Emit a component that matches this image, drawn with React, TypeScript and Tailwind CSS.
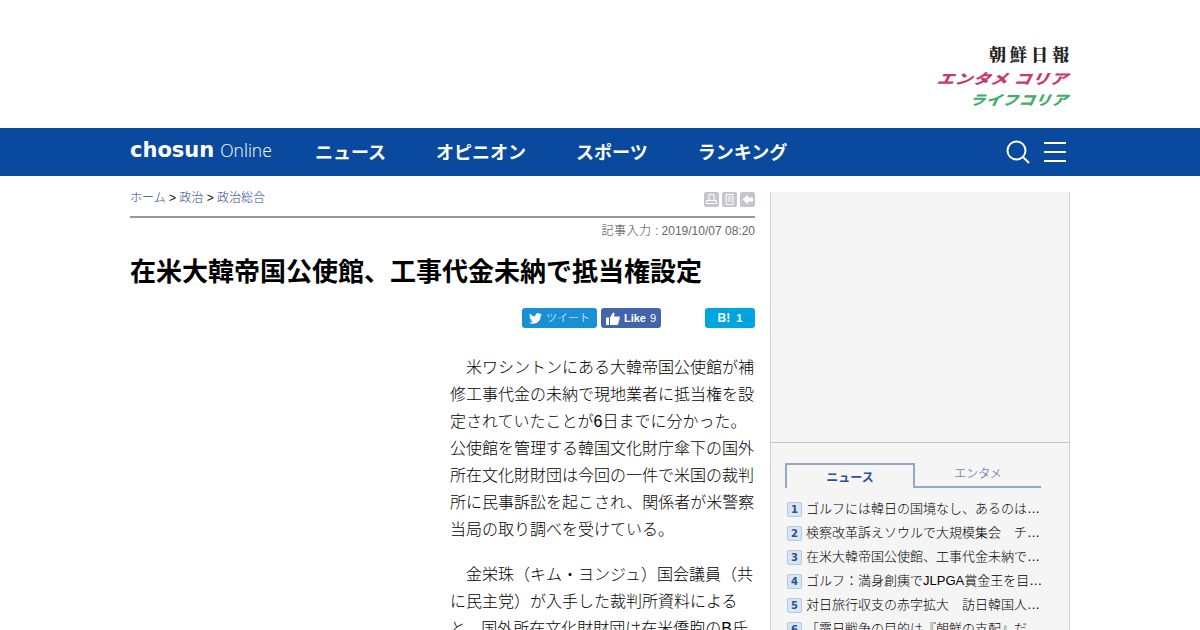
import React from 'react'

const jp = "font-['Liberation_Sans','Noto_Sans_CJK_JP',sans-serif]"

const navItems = ['ニュース', 'オピニオン', 'スポーツ', 'ランキング']

const ranking = [
  'ゴルフには韓日の国境なし、あるのは…',
  '検察改革訴えソウルで大規模集会　チ…',
  '在米大韓帝国公使館、工事代金未納で…',
  'ゴルフ：満身創痍でJLPGA賞金王を目…',
  '対日旅行収支の赤字拡大　訪日韓国人…',
  '「露日戦争の目的は『朝鮮の支配』だ…',
]

const SmallIcon = ({ kind }: { kind: string }) => (
  <span className="flex h-[15px] w-[15px] items-center justify-center rounded-[2px] bg-[#c4c8cc]">
    <svg width="11" height="11" viewBox="0 0 11 11" fill="none" stroke="#fff" strokeWidth="1">
      {kind === 'print' && <path d="M3 .5h5v6H3zM.5 6.5h10v3H.5z" />}
      {kind === 'list' && <path d="M2 .5h7v10H2zM3.5 3h4M3.5 5h4M3.5 7h4" />}
      {kind === 'back' && <path d="M1 5.5L5.5 1.5v2.5h5v3h-5v2.5z" fill="#fff" />}
    </svg>
  </span>
)

const App = () => {
  return (
    <div className={`h-[630px] w-full overflow-hidden bg-white ${jp}`}>
      {/* top logos */}
      <div className="mx-auto flex h-[128px] w-[940px] flex-col items-end pt-[44px]">
        <p className="mr-[-3px] h-[20px] font-['Noto_Serif_CJK_JP','Noto_Sans_CJK_JP',serif] text-[17px] font-black leading-[20px] tracking-[4px] text-[#222]">
          朝鮮日報
        </p>
        <p className="mr-[1px] mt-[8px] h-[14px] origin-right -skew-x-[22deg] scale-x-[1.24] text-[14px] font-black leading-[14px] tracking-[0.5px] text-[#c8396f]">
          エンタメ コリア
        </p>
        <p className="mr-[1px] mt-[8px] h-[14px] origin-right -skew-x-[22deg] scale-x-[1.17] text-[13.5px] font-black leading-[14px] tracking-[0.5px] text-[#3fae6b]">
          ライフコリア
        </p>
      </div>

      {/* nav */}
      <div className="h-[48px] bg-[#0a4a9e]">
        <div className="mx-auto flex h-full w-[940px] items-center">
          <div className="flex w-[185px] items-baseline pb-[4px] text-white">
            <span className="font-['DejaVu_Sans',sans-serif] text-[21px] font-bold leading-none">chosun</span>
            <span className="ml-[6px] font-['Open_Sans',sans-serif] text-[17.5px] font-light leading-none">Online</span>
          </div>
          <nav className="flex gap-[50px] pt-[2px] text-[18px] font-bold text-white">
            {navItems.map((item) => (
              <a key={item}>{item}</a>
            ))}
          </nav>
          <div className="ml-auto mr-[4px] flex items-center gap-[14px]">
            <svg width="24" height="24" viewBox="0 0 24 24" fill="none" stroke="#fff" strokeWidth="2">
              <circle cx="10.5" cy="10.5" r="9" />
              <path d="M17 17l6 6" />
            </svg>
            <div className="flex h-[20px] w-[22px] flex-col justify-between">
              <div className="h-[2px] bg-white" />
              <div className="h-[2px] bg-white" />
              <div className="h-[2px] bg-white" />
            </div>
          </div>
        </div>
      </div>

      {/* content */}
      <div className="mx-auto mt-[16px] flex w-[940px] justify-between">
        <div className="w-[625px]">
          <div className="flex h-[24px] items-start justify-between">
            <p className="text-[12px] font-light leading-[13px] text-[#111]">
              <a className="text-[#1f4490]">ホーム</a> &gt; <a className="text-[#1f4490]">政治</a> &gt;{' '}
              <a className="text-[#1f4490]">政治総合</a>
            </p>
            <div className="flex gap-[3px]">
              <SmallIcon kind="print" />
              <SmallIcon kind="list" />
              <SmallIcon kind="back" />
            </div>
          </div>
          <div className="h-[2px] bg-[#8e9aa6]" />
          <p className="mt-[5px] text-right text-[12px] leading-[16px] text-[#666]">
            <span className="font-light tracking-[0.5px] text-[#444]">記事入力</span> : 2019/10/07 08:20
          </p>
          <h1 className="mt-[15px] text-[26px] font-bold leading-[36px] text-black">在米大韓帝国公使館、工事代金未納で抵当権設定</h1>

          <div className="mt-[18px] flex h-[20px] text-[11px] text-white">
            <div className="ml-[392px] flex w-[75px] items-center justify-center gap-[4px] rounded-[3px] bg-[#1b8fd6]">
              <svg width="13" height="11" viewBox="0 0 24 20" fill="#fff">
                <path d="M24 2.4a9.8 9.8 0 0 1-2.8.8A4.9 4.9 0 0 0 23.3.5a9.8 9.8 0 0 1-3.1 1.2 4.9 4.9 0 0 0-8.4 4.5A14 14 0 0 1 1.7 1a4.9 4.9 0 0 0 1.5 6.6 4.9 4.9 0 0 1-2.2-.6 4.9 4.9 0 0 0 3.9 4.9 4.9 4.9 0 0 1-2.2.1 4.9 4.9 0 0 0 4.6 3.4A9.9 9.9 0 0 1 0 17.4 14 14 0 0 0 21.5 5a10 10 0 0 0 2.5-2.6z" />
              </svg>
              <span className="font-light">ツイート</span>
            </div>
            <div className="ml-[4px] flex w-[60px] items-center justify-center gap-[4px] rounded-[3px] bg-[#4264aa]">
              <svg width="14" height="13" viewBox="0 0 14 13" fill="#fff">
                <path d="M0 5.5h3V13H0zM4 5.5L7 .5c1.3 0 1.8 1 1.5 2L8 4.5h4.8c.8 0 1.2.7 1 1.4l-1.6 6c-.2.7-.6 1.1-1.3 1.1H4z" />
              </svg>
              <span className="font-bold">Like</span>
              <span>9</span>
            </div>
            <div className="ml-[44px] flex w-[50px] items-center justify-center gap-[6px] rounded-[3px] bg-[#00a4de] text-[11px] font-bold">
              <span className="text-[12px]">B!</span>
              <span>1</span>
            </div>
          </div>

          <div className="mt-[26px] pl-[320px] text-[16px] font-light leading-[27px] text-black">
            <p className="indent-[16px]">
              米ワシントンにある大韓帝国公使館が補修工事代金の未納で現地業者に抵当権を設定されていたことが6日までに分かった。公使館を管理する韓国文化財庁傘下の国外所在文化財財団は今回の一件で米国の裁判所に民事訴訟を起こされ、関係者が米警察当局の取り調べを受けている。
            </p>
            <p className="mt-[18px] indent-[16px]">
              金栄珠（キム・ヨンジュ）国会議員（共に民主党）が入手した裁判所資料によると、国外所在文化財財団は在米僑胞のB氏
            </p>
          </div>
        </div>

        {/* sidebar */}
        <aside className="h-[460px] w-[300px] border-x border-[#cfcfcf] bg-[#f5f5f5]">
          <div className="h-[251px] border-b border-[#c4c4c4]" />
          <div className="px-[14px] pt-[20px]">
            <div className="flex h-[25px] w-[256px]">
              <div className="flex w-[130px] items-center justify-center border-x-2 border-t-2 border-[#94a9c4] pt-[2px] text-[12px] font-bold text-[#2c4f96]">
                ニュース
              </div>
              <div className="flex w-[126px] items-center justify-center border-b-2 border-[#94a9c4] pb-[2px] text-[12px] font-light text-[#3c5a9c]">
                エンタメ
              </div>
            </div>
            <ul className="ml-[2px] mt-[9px] w-[262px]">
              {ranking.map((title, i) => (
                <li key={title} className="flex h-[24px] items-center">
                  <span className="mr-[4px] flex h-[15px] w-[15px] shrink-0 items-center justify-center rounded-[2px] border border-[#b4c8e0] bg-[#d8e5f5] font-['DejaVu_Sans',sans-serif] text-[10px] font-bold text-[#2c4f96]">
                    {i + 1}
                  </span>
                  <span className="whitespace-nowrap text-[13px] font-light text-black">{title}</span>
                </li>
              ))}
            </ul>
          </div>
        </aside>
      </div>
    </div>
  )
}

export default App
